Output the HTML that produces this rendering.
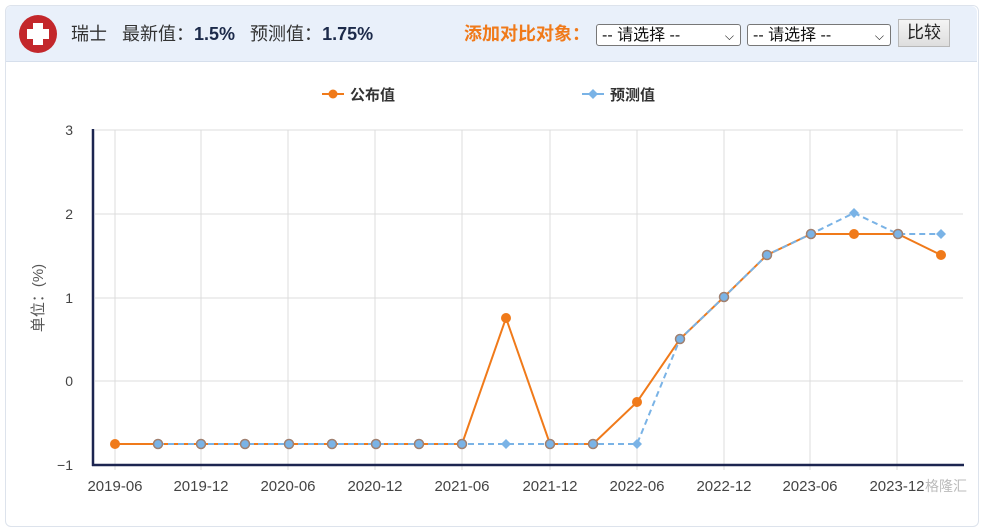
<!DOCTYPE html>
<html><head><meta charset="utf-8"><style>
body{margin:0;width:985px;height:500px;background:#fff;font-family:"Liberation Sans","Noto Sans CJK SC",sans-serif;overflow:hidden;position:relative}
.box{position:absolute;left:5px;top:5px;width:972px;height:520px;border:1px solid #dde3ec;border-radius:6px;background:#fff}
.hd{position:absolute;left:6px;top:6px;width:971px;height:55px;background:#e9f0fa;border-bottom:1px solid #d6dfec;border-radius:6px 6px 0 0}
.t{position:absolute;top:22px;font-size:18px;color:#333;line-height:24px;white-space:nowrap}
.t b{color:#1c2a4a}
.sel{position:absolute;top:24px;height:22px;border:1px solid #777;border-radius:3px;background:#fff;font-size:16px;line-height:22px;color:#111;box-sizing:border-box;padding-left:5px}
.btn{position:absolute;left:898px;top:19px;width:52px;height:28px;border:1px solid #b8b8b8;background:linear-gradient(#f4f4f4,#dedede);font-size:17px;line-height:26px;text-align:center;color:#222;box-sizing:border-box}
</style></head><body>
<div class="box"></div>
<div class="hd"></div>
<svg style="position:absolute;left:18px;top:14px" width="40" height="40" viewBox="0 0 40 40"><circle cx="20" cy="20" r="19" fill="#c3272b"/><rect x="15" y="9" width="10" height="22" fill="#fff"/><rect x="9" y="15" width="22" height="10" fill="#fff"/></svg>
<div class="t" style="left:71px">瑞士&nbsp;&nbsp; 最新值：<b>1.5%</b>&nbsp;&nbsp; 预测值：<b>1.75%</b></div>
<div class="t" style="left:464px;color:#f07a1a;font-weight:bold;font-size:18px">添加对比对象：</div>
<div class="sel" style="left:596px;width:145px">-- 请选择 --<span style="position:absolute;right:6px;font-size:12px">&#9013;</span></div>
<div class="sel" style="left:747px;width:144px">-- 请选择 --<span style="position:absolute;right:6px;font-size:12px">&#9013;</span></div>
<div class="btn">比较</div>
<svg style="position:absolute;left:0;top:0" width="985" height="500">
<g font-family="Liberation Sans,Noto Sans CJK SC,sans-serif" font-size="15" font-weight="bold" fill="#333">
<line x1="322" y1="94" x2="344" y2="94" stroke="#f07a1a" stroke-width="2"/><circle cx="333" cy="94" r="4.5" fill="#f07a1a"/>
<text x="350" y="100">公布值</text>
<line x1="582" y1="94" x2="604" y2="94" stroke="#7ab3e6" stroke-width="2"/><path d="M593 89 L598 94 L593 99 L588 94Z" fill="#7ab3e6"/>
<text x="610" y="100">预测值</text>
</g>
<g stroke="#dcdcdc" stroke-width="1">
<line x1="95" y1="130" x2="963" y2="130"/><line x1="95" y1="214" x2="963" y2="214"/><line x1="95" y1="298" x2="963" y2="298"/><line x1="95" y1="381" x2="963" y2="381"/>
<line x1="115" y1="130" x2="115" y2="470"/><line x1="201" y1="130" x2="201" y2="470"/><line x1="288" y1="130" x2="288" y2="470"/><line x1="375" y1="130" x2="375" y2="470"/><line x1="462" y1="130" x2="462" y2="470"/><line x1="550" y1="130" x2="550" y2="470"/><line x1="637" y1="130" x2="637" y2="470"/><line x1="724" y1="130" x2="724" y2="470"/><line x1="810" y1="130" x2="810" y2="470"/><line x1="897" y1="130" x2="897" y2="470"/>
</g>
<g fill="#444" font-family="Liberation Sans,sans-serif" font-size="14" text-anchor="end">
<text x="73" y="135">3</text><text x="73" y="219">2</text><text x="73" y="303">1</text><text x="73" y="386">0</text><text x="73" y="470">−1</text>
</g>
<g fill="#444" font-family="Liberation Sans,sans-serif" font-size="15" text-anchor="middle">
<text x="115" y="491">2019-06</text><text x="201" y="491">2019-12</text><text x="288" y="491">2020-06</text><text x="375" y="491">2020-12</text><text x="462" y="491">2021-06</text><text x="550" y="491">2021-12</text><text x="637" y="491">2022-06</text><text x="724" y="491">2022-12</text><text x="810" y="491">2023-06</text><text x="897" y="491">2023-12</text>
</g>
<text transform="translate(43,298) rotate(-90)" text-anchor="middle" font-size="15" fill="#555" font-family="Liberation Sans,Noto Sans CJK SC,sans-serif">单位：(%)</text>
<line x1="93" y1="129" x2="93" y2="466" stroke="#1c2550" stroke-width="2.5"/>
<line x1="92" y1="465" x2="964" y2="465" stroke="#1c2550" stroke-width="2.5"/>
<polyline fill="none" stroke="#f07a1a" stroke-width="2" points="115,444 158,444 201,444 245,444 289,444 332,444 376,444 419,444 462,444 506,318 550,444 593,444 637,402 680,339 724,297 767,255 811,234 854,234 898,234 941,255"/>
<polyline fill="none" stroke="#7ab3e6" stroke-width="2" stroke-dasharray="6,4" points="158,444 201,444 245,444 289,444 332,444 376,444 419,444 462,444 506,444 550,444 593,444 637,444 680,339 724,297 767,255 811,234 854,213 898,234 941,234"/>
<g fill="#f07a1a">
<circle cx="115" cy="444" r="5"/><circle cx="506" cy="318" r="5"/><circle cx="637" cy="402" r="5"/><circle cx="854" cy="234" r="5"/><circle cx="941" cy="255" r="5"/>
</g>
<g fill="#7ab3e6" stroke="#a08070" stroke-width="1.5">
<circle cx="158" cy="444" r="4.5"/><circle cx="201" cy="444" r="4.5"/><circle cx="245" cy="444" r="4.5"/><circle cx="289" cy="444" r="4.5"/><circle cx="332" cy="444" r="4.5"/><circle cx="376" cy="444" r="4.5"/><circle cx="419" cy="444" r="4.5"/><circle cx="462" cy="444" r="4.5"/><circle cx="550" cy="444" r="4.5"/><circle cx="593" cy="444" r="4.5"/><circle cx="680" cy="339" r="4.5"/><circle cx="724" cy="297" r="4.5"/><circle cx="767" cy="255" r="4.5"/><circle cx="811" cy="234" r="4.5"/><circle cx="898" cy="234" r="4.5"/>
</g>
<g fill="#7ab3e6">
<path d="M506 439 L511 444 L506 449 L501 444Z"/><path d="M637 439 L642 444 L637 449 L632 444Z"/><path d="M854 208 L859 213 L854 218 L849 213Z"/><path d="M941 229 L946 234 L941 239 L936 234Z"/>
</g>
<text x="925" y="491" font-size="14" fill="#bbb" font-family="Liberation Sans,Noto Sans CJK SC,sans-serif">格隆汇</text>
</svg>
</body></html>
